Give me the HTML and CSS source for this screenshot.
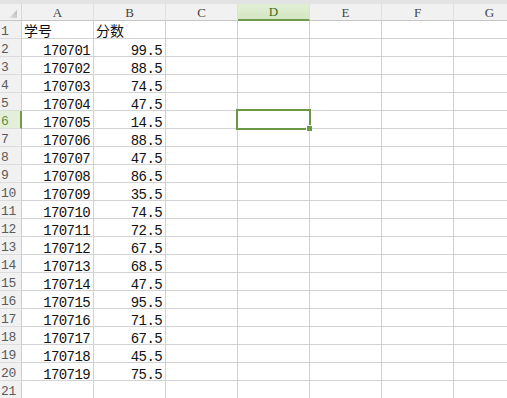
FILE: index.html
```html
<!DOCTYPE html>
<html lang="zh">
<head>
<meta charset="utf-8">
<link rel="stylesheet" href="styles.css">
</head>
<body>
<div class="sheet">
  <div class="topband"></div>
  <div class="grid">
    <div class="ch corner"><svg width="22" height="17" viewBox="0 0 22 17"><defs><linearGradient id="g" x1="0" y1="1" x2="1" y2="0"><stop offset="0" stop-color="#e4e4e4"/><stop offset="1" stop-color="#b8b8b8"/></linearGradient></defs><polygon points="9,14 17,14 17,6" fill="url(#g)"/></svg></div>
    <div class="ch">A</div><div class="ch">B</div><div class="ch">C</div><div class="ch sel">D</div><div class="ch">E</div><div class="ch">F</div><div class="ch">G</div>

    <div class="rh">1</div><div class="c t">学号</div><div class="c t">分数</div><div class="c"></div><div class="c"></div><div class="c"></div><div class="c"></div><div class="c"></div>
    <div class="rh">2</div><div class="c n">170701</div><div class="c n">99.5</div><div class="c"></div><div class="c"></div><div class="c"></div><div class="c"></div><div class="c"></div>
    <div class="rh">3</div><div class="c n">170702</div><div class="c n">88.5</div><div class="c"></div><div class="c"></div><div class="c"></div><div class="c"></div><div class="c"></div>
    <div class="rh">4</div><div class="c n">170703</div><div class="c n">74.5</div><div class="c"></div><div class="c"></div><div class="c"></div><div class="c"></div><div class="c"></div>
    <div class="rh">5</div><div class="c n">170704</div><div class="c n">47.5</div><div class="c"></div><div class="c"></div><div class="c"></div><div class="c"></div><div class="c"></div>
    <div class="rh sel">6</div><div class="c n">170705</div><div class="c n">14.5</div><div class="c"></div><div class="c active"><div class="selbox"><div class="handle"></div></div></div><div class="c"></div><div class="c"></div><div class="c"></div>
    <div class="rh">7</div><div class="c n">170706</div><div class="c n">88.5</div><div class="c"></div><div class="c"></div><div class="c"></div><div class="c"></div><div class="c"></div>
    <div class="rh">8</div><div class="c n">170707</div><div class="c n">47.5</div><div class="c"></div><div class="c"></div><div class="c"></div><div class="c"></div><div class="c"></div>
    <div class="rh">9</div><div class="c n">170708</div><div class="c n">86.5</div><div class="c"></div><div class="c"></div><div class="c"></div><div class="c"></div><div class="c"></div>
    <div class="rh">10</div><div class="c n">170709</div><div class="c n">35.5</div><div class="c"></div><div class="c"></div><div class="c"></div><div class="c"></div><div class="c"></div>
    <div class="rh">11</div><div class="c n">170710</div><div class="c n">74.5</div><div class="c"></div><div class="c"></div><div class="c"></div><div class="c"></div><div class="c"></div>
    <div class="rh">12</div><div class="c n">170711</div><div class="c n">72.5</div><div class="c"></div><div class="c"></div><div class="c"></div><div class="c"></div><div class="c"></div>
    <div class="rh">13</div><div class="c n">170712</div><div class="c n">67.5</div><div class="c"></div><div class="c"></div><div class="c"></div><div class="c"></div><div class="c"></div>
    <div class="rh">14</div><div class="c n">170713</div><div class="c n">68.5</div><div class="c"></div><div class="c"></div><div class="c"></div><div class="c"></div><div class="c"></div>
    <div class="rh">15</div><div class="c n">170714</div><div class="c n">47.5</div><div class="c"></div><div class="c"></div><div class="c"></div><div class="c"></div><div class="c"></div>
    <div class="rh">16</div><div class="c n">170715</div><div class="c n">95.5</div><div class="c"></div><div class="c"></div><div class="c"></div><div class="c"></div><div class="c"></div>
    <div class="rh">17</div><div class="c n">170716</div><div class="c n">71.5</div><div class="c"></div><div class="c"></div><div class="c"></div><div class="c"></div><div class="c"></div>
    <div class="rh">18</div><div class="c n">170717</div><div class="c n">67.5</div><div class="c"></div><div class="c"></div><div class="c"></div><div class="c"></div><div class="c"></div>
    <div class="rh">19</div><div class="c n">170718</div><div class="c n">45.5</div><div class="c"></div><div class="c"></div><div class="c"></div><div class="c"></div><div class="c"></div>
    <div class="rh">20</div><div class="c n">170719</div><div class="c n">75.5</div><div class="c"></div><div class="c"></div><div class="c"></div><div class="c"></div><div class="c"></div>
    <div class="rh">21</div><div class="c"></div><div class="c"></div><div class="c"></div><div class="c"></div><div class="c"></div><div class="c"></div><div class="c"></div>
  </div>
</div>
</body>
</html>
```

FILE: styles.css
```css
html, body {
  margin: 0;
  padding: 0;
  background: #ffffff;
  overflow: hidden;
}
.sheet {
  width: 507px;
  height: 398px;
  overflow: hidden;
}
.topband {
  height: 4px;
  background: #e3e3e3;
}
.grid {
  display: grid;
  grid-template-columns: 22px repeat(7, 72px);
  grid-template-rows: 17px;
  grid-auto-rows: 18px;
  width: 526px;
}
.ch {
  box-sizing: border-box;
  background: #f1f1f1;
  border-right: 1px solid #dedede;
  border-bottom: 1px solid #c6c6c6;
  font-family: "Liberation Serif", serif;
  font-size: 13px;
  color: #444444;
  text-align: center;
  line-height: 17px;
}
.ch.corner {
  border-right-color: #d8d8d8;
}
.ch.corner svg {
  display: block;
}
.ch.sel {
  background: linear-gradient(#e2efd6, #d3e6c1);
  border-bottom: 2px solid #6e9b4c;
  color: #3f6a25;
  line-height: 16px;
}
.rh {
  box-sizing: border-box;
  background: #f1f1f1;
  border-right: 1px solid #cfcfcf;
  border-bottom: 1px solid #dcdcdc;
  font-family: "Liberation Mono", monospace;
  font-size: 13px;
  letter-spacing: -0.4px;
  color: #5a5a5a;
  padding-left: 1px;
  padding-top: 5px;
  line-height: 11px;
}
.rh.sel {
  background: #e3efd9;
  border-right: 2px solid #6e9b4c;
  color: #5e9140;
}
.c {
  box-sizing: border-box;
  border-right: 1px solid #d2d2d2;
  border-bottom: 1px solid #d2d2d2;
  color: #111111;
  white-space: nowrap;
}
.c.n {
  font-family: "Liberation Mono", monospace;
  font-size: 14px;
  letter-spacing: -0.6px;
  text-align: right;
  padding-right: 3px;
  padding-top: 7px;
  line-height: 10px;
}
.c.t {
  font-family: "Noto Sans CJK SC", sans-serif;
  font-size: 14px;
  padding-left: 2px;
  padding-top: 2px;
  line-height: 15px;
}
.c.active {
  position: relative;
}
.selbox {
  position: absolute;
  left: -2px;
  top: -2px;
  width: 75px;
  height: 21px;
  box-sizing: border-box;
  border: 2px solid #6a9946;
}
.handle {
  position: absolute;
  right: -3px;
  bottom: -3px;
  width: 5px;
  height: 5px;
  background: #6a9946;
  border-left: 1px solid #ffffff;
  border-top: 1px solid #ffffff;
}
```
